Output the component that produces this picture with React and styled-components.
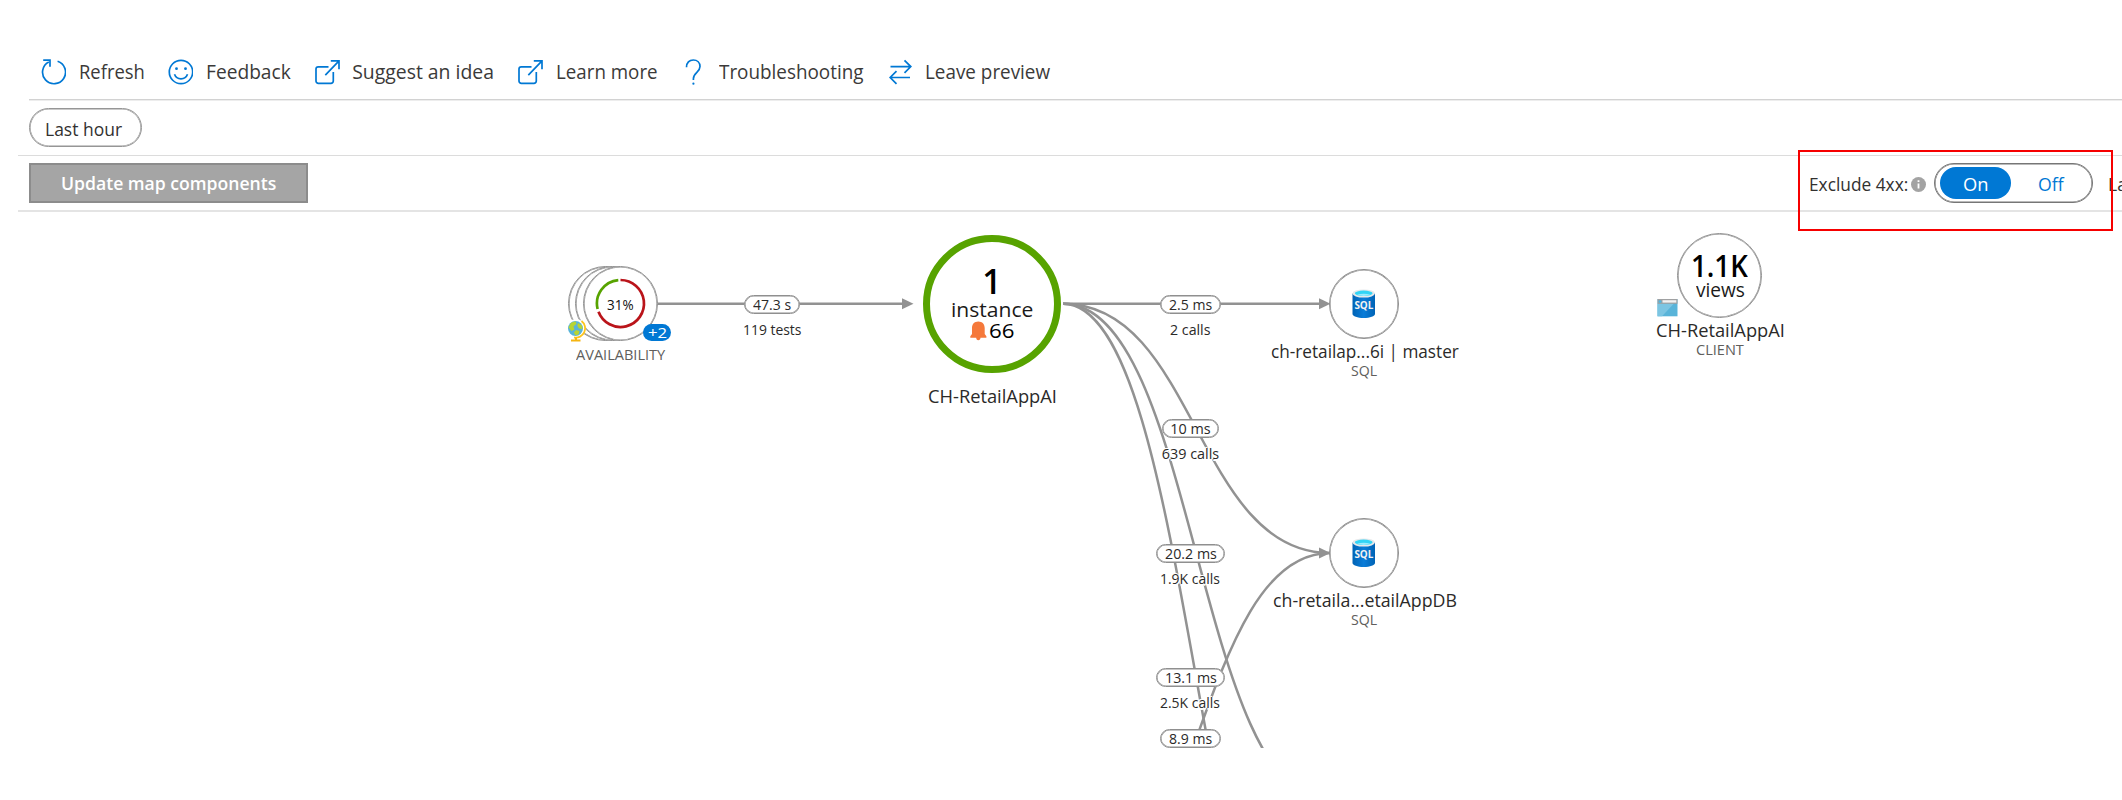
import React, { useLayoutEffect, useRef, useState } from "react";
import styled, { createGlobalStyle, css } from "styled-components";

const BLUE = "#0078d4";
const GREY = "#929292";
const MAP_TOP = 212;
const MAP_HEIGHT = 536;

const GlobalStyle = createGlobalStyle`
  * { box-sizing: border-box; }
  body {
    margin: 0;
    background: #fff;
    overflow: hidden;
    font-family: "Open Sans", "Noto Sans", sans-serif;
    color: #323130;
  }
  svg { display: block; flex: none; }
`;

const Page = styled.div`
  width: 2122px;
  height: 800px;
  overflow: hidden;
  display: flex;
  flex-direction: column;
`;

/* Text condensed or expanded to an exact advance width */
const FitBox = styled.span`
  display: block;
  flex: none;
  width: ${(p) => p.$w}px;
  white-space: nowrap;
  text-align: left;
`;
const FitInner = styled.span`
  display: block;
  width: max-content;
  transform-origin: 0 50%;
`;

function Fit({ w, children }) {
  const ref = useRef(null);
  const [scale, setScale] = useState(1);
  useLayoutEffect(() => {
    const natural = ref.current.offsetWidth;
    if (natural) setScale(w / natural);
  }, [w]);
  return (
    <FitBox $w={w}>
      <FitInner ref={ref} style={{ transform: `scaleX(${scale})` }}>{children}</FitInner>
    </FitBox>
  );
}

/* ---------- header rows ---------- */
const Toolbar = styled.div`
  flex: none;
  height: 100px;
  margin-left: 29px;
  padding: 44px 0 0 12px;
  display: flex;
  align-items: center;
  gap: 24.1px;
  border-bottom: 1px solid #d2d2d2;
  box-shadow: 0 1px 0 #ededed;
`;
const Command = styled.div`
  display: flex;
  align-items: center;
  gap: 12.5px;
  font-size: 19.4px;
  line-height: 26px;
  color: #3b3a39;
`;
const FilterRow = styled.div`
  flex: none;
  height: 56px;
  margin-left: 18px;
  padding: 8px 0 0 11px;
  border-bottom: 1px solid #dcdcdc;
`;
const outline = css`
  border: 1px solid ${(p) => p.$line || "#8f8f8f"};
  box-shadow: inset 0 0 0 0.6px ${(p) => p.$line || "#8f8f8f"};
`;
const TimePill = styled.div`
  ${outline}
  width: 113px;
  height: 39px;
  padding: 2px 0 0 15px;
  display: flex;
  align-items: center;
  border-radius: 20px;
  font-size: 18.4px;
`;
const ActionRow = styled.div`
  flex: none;
  height: 56px;
  margin-left: 18px;
  padding: 7px 0 0 11px;
  display: flex;
  align-items: flex-start;
  justify-content: space-between;
  border-bottom: 2px solid #e4e4e4;
`;
const UpdateButton = styled.div`
  width: 279px;
  height: 40px;
  padding-bottom: 1px;
  display: flex;
  align-items: center;
  justify-content: center;
  border: 2px solid #8c8c8c;
  background: #a5a5a5;
  color: #fff;
  font-size: 18px;
  font-weight: 600;
`;
const Options = styled.div`
  position: relative;
  width: 313px;
  height: 40px;
  display: flex;
  align-items: center;
  font-size: 18px;
`;
const OptionText = styled.div`
  padding-top: 2px;
`;
const InfoDot = styled.span`
  flex: none;
  padding: 2px 8px 0 3px;
`;
const Toggle = styled.div`
  ${outline}
  flex: none;
  width: 159px;
  height: 40px;
  margin-right: 14.5px;
  padding: 0 5px;
  display: flex;
  align-items: center;
  gap: 4px;
  border-radius: 20px;
`;
const ToggleOption = styled.span`
  width: 71px;
  height: 32px;
  padding-top: 2px;
  display: flex;
  align-items: center;
  justify-content: center;
  border-radius: 16px;
  color: ${(p) => (p.$on ? "#fff" : BLUE)};
  background: ${(p) => (p.$on ? BLUE : "transparent")};
`;
const Highlight = styled.div`
  position: absolute;
  left: -11px;
  top: -13px;
  width: 315px;
  height: 81px;
  border: 2px solid #f60000;
  z-index: 2;
`;

/* ---------- map canvas ---------- */
const MapArea = styled.div`
  position: relative;
  flex: none;
  height: ${MAP_HEIGHT}px;
  overflow: hidden;
`;
const Edges = styled.svg`
  position: absolute;
  inset: 0;
`;
const NodeBox = styled.div`
  position: absolute;
  left: ${(p) => p.$cx - 110}px;
  top: ${(p) => p.$cy - p.$r - MAP_TOP}px;
  width: 220px;
  display: flex;
  flex-direction: column;
  align-items: center;
`;
const Disc = styled.div`
  ${outline}
  position: relative;
  flex: none;
  width: ${(p) => p.$r * 2}px;
  height: ${(p) => p.$r * 2}px;
  display: flex;
  flex-direction: column;
  align-items: center;
  justify-content: center;
  border-radius: 50%;
  background: #fff;
`;
const InstanceDisc = styled(Disc)`
  padding-bottom: 3.6px;
  border: 7px solid #57a300;
  box-shadow: none;
`;
const ViewsDisc = styled(Disc)`
  padding-top: 3.6px;
`;
const DiscBehind = styled(Disc)`
  position: absolute;
  top: 0;
  left: ${(p) => 110 - p.$r - p.$shift}px;
`;
const Name = styled.div`
  margin-top: ${(p) => p.$gap || 0}px;
  font-size: 18.8px;
  line-height: 24px;
  color: #2b2a29;
`;
const Kind = styled.div`
  margin-top: ${(p) => p.$gap || 0}px;
  font-size: 14.4px;
  line-height: 16px;
  color: #605e5c;
`;
const Figure = styled.div`
  font-size: ${(p) => p.$size}px;
  line-height: ${(p) => p.$line}px;
  font-weight: 600;
  color: #000;
`;
const Unit = styled.div`
  font-size: 19.3px;
  line-height: 23px;
  color: #1b1a19;
`;
const AlertRow = styled.div`
  display: flex;
  align-items: center;
  gap: 2px;
  font-size: 20.5px;
  font-weight: 500;
  line-height: 19px;
  color: #000;
`;
const Percent = styled.div`
  position: absolute;
  inset: 1px 0 0;
  display: flex;
  align-items: center;
  justify-content: center;
  font-size: 14.5px;
  font-weight: 500;
  color: #111;
`;
const Badge = styled.div`
  position: absolute;
  left: 133px;
  top: 58px;
  width: 28px;
  height: 17px;
  display: flex;
  align-items: center;
  justify-content: center;
  border-radius: 9px;
  background: ${BLUE};
  color: #fff;
  font-size: 15px;
  line-height: 17px;
`;
const Corner = styled.div`
  position: absolute;
  left: ${(p) => p.$x}px;
  top: ${(p) => p.$y}px;
`;

const EdgeBox = styled.div`
  position: absolute;
  left: ${(p) => p.$cx - 50}px;
  top: ${(p) => p.$cy - 9.5 - MAP_TOP}px;
  width: 100px;
  display: flex;
  flex-direction: column;
  align-items: center;
  gap: 6px;
  font-size: 14.4px;
  color: #2b2a29;
`;
const Chip = styled.div`
  ${outline}
  width: ${(p) => p.$w}px;
  height: 19px;
  display: flex;
  align-items: center;
  justify-content: center;
  border-radius: 10px;
  background: #fff;
  line-height: 17px;
`;
const Calls = styled.div`
  line-height: 19px;
  text-shadow: 1.5px 0 #fff, -1.5px 0 #fff, 0 1.5px #fff, 0 -1.5px #fff, 1px 1px #fff, -1px -1px #fff;
`;

function EdgeLabel({ cx, cy, w, time, timeW, calls, callsW }) {
  return (
    <EdgeBox $cx={cx} $cy={cy}>
      <Chip $w={w}><Fit w={timeW}>{time}</Fit></Chip>
      {calls && <Calls><Fit w={callsW}>{calls}</Fit></Calls>}
    </EdgeBox>
  );
}

/* ---------- icons ---------- */
const Icon = ({ children }) => (
  <svg width="25" height="26" viewBox="0 0 25 26" fill="none" stroke={BLUE} strokeWidth="1.7">{children}</svg>
);
const RefreshIcon = () => (
  <Icon>
    <path d="M7.8 3A11.500 11.500 0 1 0 16.600 2.300" />
    <path d="M2.200 1.100H9v6.700" />
  </Icon>
);
const SmileIcon = () => (
  <Icon>
    <circle cx="13" cy="13" r="11.700" />
    <path d="M6.500 15.200a6.900 6.900 0 0 0 13 0" />
    <circle cx="8.500" cy="9.700" r="1.400" fill={BLUE} stroke="none" />
    <circle cx="17.500" cy="9.700" r="1.400" fill={BLUE} stroke="none" />
  </Icon>
);
const LaunchIcon = () => (
  <Icon>
    <path d="M13.500 7.800H3.300A2.300 2.300 0 0 0 1 10.100V22A2.300 2.300 0 0 0 3.300 24.300H16A2.300 2.300 0 0 0 18.300 22V13" />
    <path d="M10.300 16.200L23.800 2.200M15.800 1.900H24V10.200" />
  </Icon>
);
const QuestionIcon = () => (
  <Icon>
    <path d="M5.500 8.200C5.500 3.700 8.300 1 12.300 1C16.300 1 19 3.700 19 7.500C19 13.400 12.400 13.200 12.400 19.800V21" />
    <circle cx="12.400" cy="24.700" r="1.100" fill={BLUE} stroke="none" />
  </Icon>
);
const SwapIcon = () => (
  <Icon>
    <path d="M2.500 7.600H22.500M16.500 1.300L22.800 7.600L16.500 13.900" />
    <path d="M22 18.500H2.200M8.500 12.200L2.200 18.500L8.500 24.800" />
  </Icon>
);
const InfoIcon = () => (
  <svg width="15" height="15" viewBox="0 0 15 15">
    <circle cx="7.500" cy="7.500" r="7.500" fill="#a3a3a3" />
    <path d="M7.500 6.500V11.500M7.500 3.200V5" stroke="#fff" strokeWidth="1.800" />
  </svg>
);
const BellIcon = () => (
  <svg width="17" height="20" viewBox="0 0 17 20">
    <path d="M8.300 .5C4.300 .5 2 3.300 2 7V13L.3 15.300V16.800H6.200C6.200 18.200 7 19.300 8.300 19.300S10.500 18.200 10.500 16.800H16.400V15.300L14.700 13V7C14.700 3.300 12.300 .5 8.300 .5Z" fill="#f5793b" />
  </svg>
);
const AvailabilityRing = () => (
  <svg width="53" height="53" viewBox="-26.500 -26.500 53 53" fill="none" strokeWidth="2.700">
    <path d="M0 -23.500A23.500 23.500 0 1 1 -22 8.300" stroke="#ba141a" />
    <path d="M-22.900 5.500A23.500 23.500 0 0 1 -2.200 -23.400" stroke="#57a300" />
  </svg>
);
const GlobeIcon = () => (
  <svg width="21" height="23" viewBox="0 0 21 23">
    <circle cx="9" cy="9.500" r="9.500" fill="#fff" />
    <path d="M14.500 2A9.300 9.300 0 0 1 7 18.500" fill="none" stroke="#fcc41d" strokeWidth="1.800" />
    <circle cx="8.500" cy="9.500" r="7.500" fill="#59b4d9" />
    <path d="M4 3.800L8.500 2.300L9.500 4.800L6.500 7.500L7.500 10.500L4.500 12L1.500 8.500ZM11 4L15 6.500L15.500 10L12 9.500L10.300 6.800ZM9 11L12.500 12L11.500 15.500L8.500 16.500L6.800 13.500Z" fill="#b8d432" />
    <path d="M9 18.500V21M4 21.600H13.500" stroke="#f5b512" strokeWidth="2" />
  </svg>
);
const BrowserIcon = () => (
  <svg width="21" height="18" viewBox="0 0 21 18">
    <path d="M.5 0H20.500V17.300H.5Z" fill="#59b4d9" />
    <path d="M.5 4.500H17L5 17.300H.5Z" fill="#7cc5e2" />
    <path d="M.5 0H20.500V4.800H.5Z" fill="#a0a1a2" />
    <path d="M5.500 1.200H19.300V3.600H5.500Z" fill="#f2f2f2" />
    <circle cx="3" cy="2.500" r="1.600" fill="#59b4d9" />
  </svg>
);
const SqlIcon = ({ id }) => (
  <svg width="24" height="30" viewBox="0 0 24 30">
    <defs>
      <linearGradient id={id} x1="0" x2="1">
        <stop offset="0" stopColor="#0063b5" />
        <stop offset="0.5" stopColor="#0a7cd8" />
        <stop offset="1" stopColor="#0063b5" />
      </linearGradient>
    </defs>
    <path d="M.5 4.500V25C.5 27.200 5.500 29 11.700 29S23 27.200 23 25V4.500Z" fill={`url(#${id})`} />
    <ellipse cx="11.700" cy="4.500" rx="11.200" ry="4.100" fill="#e6e8ea" />
    <ellipse cx="11.700" cy="4.300" rx="8.900" ry="2.700" fill="#32d4f5" />
    <path d="M5 5.800Q11.700 3.600 18.400 5.800Q11.700 8 5 5.800Z" fill="#9cebff" />
    <text x="11.900" y="19.900" textAnchor="middle" textLength="19" lengthAdjust="spacingAndGlyphs" fontSize="11" fontWeight="700" fill="#f2f2f2">SQL</text>
  </svg>
);

function SqlNode({ cy, id, name, nameW }) {
  return (
    <NodeBox $cx={1364.3} $cy={cy} $r={35}>
      <Disc $r={35}><SqlIcon id={id} /></Disc>
      <Name><Fit w={nameW}>{name}</Fit></Name>
      <Kind><Fit w={26.5}>SQL</Fit></Kind>
    </NodeBox>
  );
}

const commands = [
  ["Refresh", 65.5, RefreshIcon],
  ["Feedback", 85, SmileIcon],
  ["Suggest an idea", 142, LaunchIcon],
  ["Learn more", 101.5, LaunchIcon],
  ["Troubleshooting", 145, QuestionIcon],
  ["Leave preview", 125.5, SwapIcon],
];

const curves = [
  "M1063 303.700C1196 303.700 1196 553 1330 553",
  "M1063 303.700C1196 303.700 1196 802 1330 802",
  "M1063 303.700C1196 303.700 1196 1051 1330 1051",
  "M1063 925C1196 925 1196 553 1330 553",
];

export default function App() {
  return (
    <Page>
      <GlobalStyle />
      <Toolbar>
        {commands.map(([name, w, CommandIcon]) => (
          <Command key={name}>
            <CommandIcon />
            <Fit w={w}>{name}</Fit>
          </Command>
        ))}
      </Toolbar>
      <FilterRow>
        <TimePill $line="#969696"><Fit w={77}>Last hour</Fit></TimePill>
      </FilterRow>
      <ActionRow>
        <UpdateButton><Fit w={215}>Update map components</Fit></UpdateButton>
        <Options>
          <Highlight />
          <OptionText><Fit w={99}>Exclude 4xx:</Fit></OptionText>
          <InfoDot><InfoIcon /></InfoDot>
          <Toggle $line="#767676">
            <ToggleOption $on><Fit w={25.5}>On</Fit></ToggleOption>
            <ToggleOption><Fit w={25.5}>Off</Fit></ToggleOption>
          </Toggle>
          <OptionText><Fit w={18.5}>La</Fit></OptionText>
        </Options>
      </ActionRow>

      <MapArea>
        <Edges width="2122" height={MAP_HEIGHT} viewBox={`0 ${MAP_TOP} 2122 ${MAP_HEIGHT}`}>
          <g fill="none" stroke={GREY} strokeWidth="2.500">
            <path d="M657 303.700H904M1063 303.700H1322" />
            {curves.map((d) => <path key={d} d={d} />)}
          </g>
          <g fill={GREY}>
            <path d="M902 298.200L913.500 303.700L902 309.200Z" />
            <path d="M1319 298.200L1330.500 303.700L1319 309.200Z" />
            <path d="M1319 547.500L1330.500 553L1319 558.500Z" />
          </g>
        </Edges>

        <NodeBox $cx={620.3} $cy={303.8} $r={37.5}>
          <DiscBehind $r={37.5} $shift={14.800} />
          <DiscBehind $r={37.5} $shift={7.400} />
          <Disc $r={37.5}>
            <AvailabilityRing />
            <Percent><Fit w={27}>31%</Fit></Percent>
          </Disc>
          <Corner $x={56.5} $y={53}><GlobeIcon /></Corner>
          <Badge><Fit w={19}>+2</Fit></Badge>
          <Kind $gap={5.5}><Fit w={89}>AVAILABILITY</Fit></Kind>
        </NodeBox>

        <NodeBox $cx={991.8} $cy={304} $r={69.3}>
          <InstanceDisc $r={69.3}>
            <Figure $size={33.5} $line={34}><Fit w={19}>1</Fit></Figure>
            <Unit><Fit w={82}>instance</Fit></Unit>
            <AlertRow><BellIcon /><Fit w={25}>66</Fit></AlertRow>
          </InstanceDisc>
          <Name $gap={11}><Fit w={128.5}>CH-RetailAppAI</Fit></Name>
        </NodeBox>

        <EdgeLabel cx={772} cy={304} w={56} time="47.3 s" timeW={38} calls="119 tests" callsW={58} />
        <EdgeLabel cx={1190.3} cy={304} w={61} time="2.5 ms" timeW={43} calls="2 calls" callsW={40.5} />
        <EdgeLabel cx={1190.3} cy={428.700} w={57.5} time="10 ms" timeW={40} calls="639 calls" callsW={57} />
        <EdgeLabel cx={1190.3} cy={553} w={69} time="20.2 ms" timeW={51.5} calls="1.9K calls" callsW={60} />
        <EdgeLabel cx={1190.3} cy={677} w={69} time="13.1 ms" timeW={51.5} calls="2.5K calls" callsW={60} />
        <EdgeLabel cx={1190.3} cy={738.900} w={61} time="8.9 ms" timeW={43} />

        <SqlNode cy={304} id="cylinder-master" name="ch-retailap...6i | master" nameW={187.5} />
        <SqlNode cy={553} id="cylinder-app" name="ch-retaila...etailAppDB" nameW={183.5} />

        <NodeBox $cx={1719.800} $cy={275.500} $r={42.700}>
          <ViewsDisc $r={42.700}>
            <Figure $size={31} $line={25}><Fit w={57}>1.1K</Fit></Figure>
            <Unit><Fit w={48.5}>views</Fit></Unit>
          </ViewsDisc>
          <Corner $x={47.500} $y={66.500}><BrowserIcon /></Corner>
          <Name><Fit w={128.5}>CH-RetailAppAI</Fit></Name>
          <Kind><Fit w={47.5}>CLIENT</Fit></Kind>
        </NodeBox>
      </MapArea>
    </Page>
  );
}
